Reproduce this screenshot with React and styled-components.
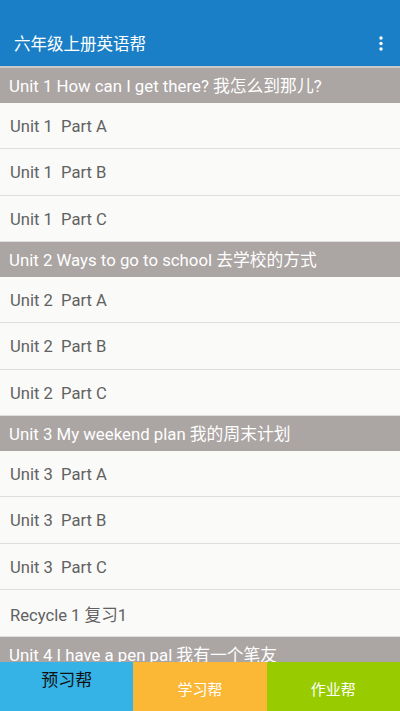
import React from 'react';
import styled, { createGlobalStyle } from 'styled-components';

const units = [
	{
		title: 'Unit 1 How can I get there? 我怎么到那儿?',
		parts: ['Unit 1  Part A', 'Unit 1  Part B', 'Unit 1  Part C'],
	},
	{
		title: 'Unit 2 Ways to go to school 去学校的方式',
		parts: ['Unit 2  Part A', 'Unit 2  Part B', 'Unit 2  Part C'],
	},
	{
		title: 'Unit 3 My weekend plan 我的周末计划',
		parts: ['Unit 3  Part A', 'Unit 3  Part B', 'Unit 3  Part C', 'Recycle 1 复习1'],
	},
	{
		title: 'Unit 4 I have a pen pal 我有一个笔友',
		parts: [],
	},
];

const tabs = [
	{ text: '预习帮', bg: '#35b3e7', active: true },
	{ text: '学习帮', bg: '#fbb736' },
	{ text: '作业帮', bg: '#99cc00' },
];

const GlobalStyle = createGlobalStyle`
  html, body {
    margin: 0;
    padding: 0;
    background: #fafaf9;
  }
  * {
    box-sizing: border-box;
  }
  body {
    font-family: Roboto, "Noto Sans CJK SC", sans-serif;
  }
`;

const App = () => {
	return (
		<Page>
			<GlobalStyle />
			<Header>
				<Title>六年级上册英语帮</Title>
				<MenuButton aria-label="more">
					<svg width="6" height="16" viewBox="0 0 6 16">
						<circle cx="3" cy="2" r="1.7" fill="#fff" />
						<circle cx="3" cy="7.5" r="1.7" fill="#fff" />
						<circle cx="3" cy="13" r="1.7" fill="#fff" />
					</svg>
				</MenuButton>
			</Header>
			<List>
				{units.map((unit) => (
					<React.Fragment key={unit.title}>
						<SectionTitle>{unit.title}</SectionTitle>
						{unit.parts.map((part) => (
							<Row key={part}>{part}</Row>
						))}
					</React.Fragment>
				))}
			</List>
			<TabBar>
				{tabs.map((tab) => (
					<Tab key={tab.text} $bg={tab.bg} $active={tab.active}>
						{tab.text}
					</Tab>
				))}
			</TabBar>
		</Page>
	);
};

const Page = styled.div`
  height: 100vh;
  display: flex;
  flex-direction: column;
  overflow: hidden;
`;

const Header = styled.header`
  flex: none;
  height: 68px;
  padding: 20px 16px 0 14px;
  display: flex;
  align-items: center;
  justify-content: space-between;
  background: #1a7fc6;
  border-bottom: 2px solid #c9c9c9;
`;

const Title = styled.h1`
  margin: 0;
  font-size: 16.5px;
  font-weight: 400;
  color: #fff;
  font-family: "Noto Sans CJK SC", sans-serif;
`;

const MenuButton = styled.div`
  display: flex;
  align-items: center;
  padding-top: 2px;
`;

const List = styled.div`
  flex: 1;
  overflow: hidden;
`;

const SectionTitle = styled.div`
  height: 34.5px;
  display: flex;
  align-items: center;
  padding-left: 9px;
  background: #aba5a3;
  color: #fff;
  font-size: 16.8px;
  white-space: nowrap;
`;

const Row = styled.div`
  height: 46.5px;
  display: flex;
  align-items: center;
  padding: 2px 0 0 10px;
  background: #fafaf9;
  color: #616161;
  font-size: 16.6px;
  white-space: pre;
  border-bottom: 1px solid #dedede;
`;

const TabBar = styled.nav`
  flex: none;
  height: 49px;
  display: grid;
  grid-template-columns: repeat(3, 1fr);
`;

const Tab = styled.div`
  display: flex;
  justify-content: center;
  align-items: ${(p) => (p.$active ? 'flex-start' : 'center')};
  padding-top: 4px;
  background: ${(p) => p.$bg};
  color: ${(p) => (p.$active ? '#111' : '#fff')};
  font-size: ${(p) => (p.$active ? '17px' : '15px')};
  font-family: "Noto Sans CJK SC", sans-serif;
`;

export default App;
